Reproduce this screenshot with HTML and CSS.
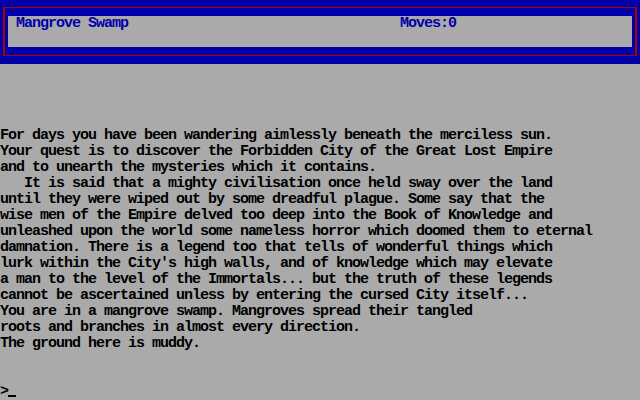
FILE: index.html
```html
<!DOCTYPE html>
<html lang="en">
<head>
<meta charset="utf-8">
<title>Mangrove Swamp</title>
<link rel="stylesheet" href="styles.css">
</head>
<body>
<header class="statusbar">
  <div class="frame">
    <div class="panel">
      <span class="location">Mangrove Swamp</span>
      <span class="moves">Moves:0</span>
    </div>
  </div>
</header>
<main class="screen">
<pre class="output">For days you have been wandering aimlessly beneath the merciless sun.
Your quest is to discover the Forbidden City of the Great Lost Empire
and to unearth the mysteries which it contains.
   It is said that a mighty civilisation once held sway over the land
until they were wiped out by some dreadful plague. Some say that the
wise men of the Empire delved too deep into the Book of Knowledge and
unleashed upon the world some nameless horror which doomed them to eternal
damnation. There is a legend too that tells of wonderful things which
lurk within the City's high walls, and of knowledge which may elevate
a man to the level of the Immortals... but the truth of these legends
cannot be ascertained unless by entering the cursed City itself...
You are in a mangrove swamp. Mangroves spread their tangled
roots and branches in almost every direction.
The ground here is muddy.


&gt;<span class="cursor"></span></pre>
</main>
</body>
</html>
```
FILE: styles.css
```css
html, body {
  margin: 0;
  padding: 0;
  background: #aaaaaa;
}

body {
  width: 640px;
  height: 400px;
  overflow: hidden;
  font-family: "Liberation Mono", "DejaVu Sans Mono", monospace;
  font-size: 15px;
  font-weight: bold;
  letter-spacing: -1px;
  line-height: 16px;
}

.statusbar {
  background: #0000aa;
  padding: 7px 3px 8px 3px;
}

.frame {
  border-style: solid;
  border-color: #aa0000;
  border-width: 1px 2px;
  padding: 8px 3px;
}

.panel {
  background: #aaaaaa;
  height: 31px;
  padding-left: 8px;
  display: grid;
  grid-template-columns: 384px auto;
  align-items: start;
  color: #0000aa;
  white-space: pre;
}

.screen {
  padding-top: 64px;
}

.output {
  margin: 0;
  font: inherit;
  letter-spacing: inherit;
  color: #000000;
}

.cursor {
  display: inline-block;
  width: 8px;
  height: 0;
  border-bottom: 2px solid #000000;
  margin-bottom: -2px;
}
```
